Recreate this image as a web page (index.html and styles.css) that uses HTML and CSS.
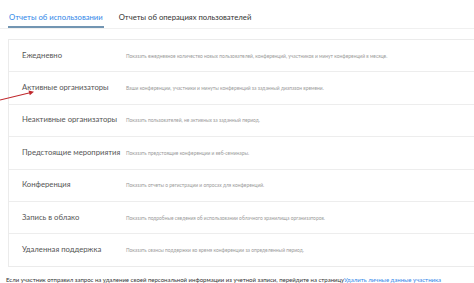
FILE: index.html
```html
<!DOCTYPE html>
<html lang="ru">
<head>
<meta charset="utf-8">
<link rel="stylesheet" href="styles.css">
</head>
<body>
<div class="page">
  <nav class="tabs">
    <div class="tab active">Отчеты об использовании</div>
    <div class="tab">Отчеты об операциях пользователей</div>
  </nav>
  <div class="card">
    <div class="row"><div class="title">Ежедневно</div><div class="desc">Показать ежедневное количество новых пользователей, конференций, участников и минут конференций в месяце.</div></div>
    <div class="row"><div class="title">Активные организаторы</div><div class="desc">Ваши конференции, участники и минуты конференций за заданный диапазон времени.</div></div>
    <div class="row"><div class="title">Неактивные организаторы</div><div class="desc">Показать пользователей, не активных за заданный период.</div></div>
    <div class="row"><div class="title">Предстоящие мероприятия</div><div class="desc">Показать предстоящие конференции и веб-семинары.</div></div>
    <div class="row"><div class="title">Конференция</div><div class="desc">Показать отчеты о регистрации и опросах для конференций.</div></div>
    <div class="row"><div class="title">Запись в облако</div><div class="desc">Показать подробные сведения об использовании облачного хранилища организаторов.</div></div>
    <div class="row"><div class="title">Удаленная поддержка</div><div class="desc">Показать сеансы поддержки во время конференции за определенный период.</div></div>
  </div>
  <p class="footer">Если участник отправил запрос на удаление своей персональной информации из учетной записи, перейдите на страницу<a class="link">Удалить личные данные участника</a></p>
  <svg class="arrow" width="40" height="20" viewBox="0 0 40 20">
    <line x1="0" y1="15" x2="31" y2="7.5" stroke="#c0282d" stroke-width="1.2"/>
    <path d="M34 6.8 L28.5 5.6 L29.8 10.2 Z" fill="#c0282d"/>
  </svg>
</div>
</body>
</html>
```
FILE: styles.css
```css
html, body {
  margin: 0;
  padding: 0;
  background: #fff;
  overflow: hidden;
}
body {
  font-family: Lato, "Open Sans", "Liberation Sans", sans-serif;
  width: 474px;
  height: 283px;
}
.page {
  position: relative;
}
.tabs {
  display: flex;
  gap: 14px;
  padding-left: 8px;
  border-bottom: 1px solid #f0f0f0;
  height: 28px;
}
.tab {
  font-size: 7.7px;
  line-height: 10px;
  color: #333;
  padding: 12px 1px 4px;
  border-bottom: 2px solid transparent;
}
.tab.active {
  color: #2f86e8;
  border-bottom-color: #7295b2;
}
.card {
  margin: 10px -20px 0 8px;
  border: 1px solid #ebebeb;
}
.row {
  display: grid;
  grid-template-columns: 104px 1fr;
  align-items: center;
  height: 31.4px;
  border-bottom: 1px solid #ededed;
  padding-left: 13px;
}
.row:last-child {
  border-bottom: none;
}
.title {
  font-size: 7.7px;
  color: #555;
  margin-top: -2px;
  white-space: nowrap;
}
.desc {
  font-size: 4.9px;
  color: #9a9a9a;
  white-space: nowrap;
}
.footer {
  margin: 9px 0 0 6px;
  font-size: 6px;
  line-height: 8px;
  color: #333;
  white-space: nowrap;
}
.link {
  color: #2f86e8;
}
.arrow {
  position: absolute;
  left: 0;
  top: 85px;
}
```
